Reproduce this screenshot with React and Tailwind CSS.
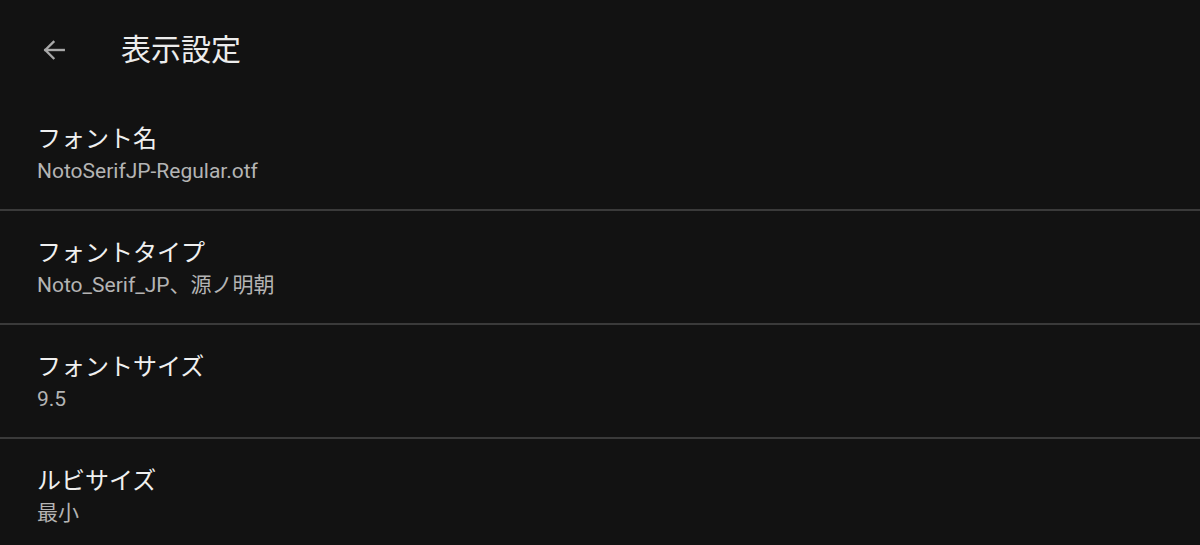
import React from "react";

const items = [
  { title: "フォント名", value: "NotoSerifJP-Regular.otf" },
  { title: "フォントタイプ", value: "Noto_Serif_JP、源ノ明朝" },
  { title: "フォントサイズ", value: "9.5" },
  { title: "ルビサイズ", value: "最小" },
];

function BackArrow() {
  return (
    <svg width="26" height="26" viewBox="0 0 24 24" fill="none" stroke="#a8a8a8" strokeWidth="2.2" strokeLinecap="square">
      <path d="M21 12H4" />
      <path d="M11.5 4.5L4 12l7.5 7.5" />
    </svg>
  );
}

export default function App() {
  return (
    <div
      className="w-[1200px] h-[545px] overflow-hidden bg-[#121212]"
      style={{ fontFamily: 'Roboto, "Noto Sans CJK JP", sans-serif' }}
    >
      {/* header */}
      <div className="h-[97px] pt-[3px] flex items-center">
        <div className="w-[121px] flex pl-[41px]">
          <BackArrow />
        </div>
        <h1 className="text-[30px] leading-[36px] text-[#ececec] font-normal">表示設定</h1>
      </div>

      {items.map((item, i) => (
        <div
          key={item.title}
          className={
            "px-[37px] pt-[26px] pb-[21px] " +
            (i < items.length - 1 ? "border-b-2 border-[#3a3a3a]" : "")
          }
        >
          <div className="text-[24px] leading-[32px] text-[#f0f0f0]">{item.title}</div>
          <div className="text-[21px] leading-[33px] text-[#b4b4b4]">{item.value}</div>
        </div>
      ))}
    </div>
  );
}
